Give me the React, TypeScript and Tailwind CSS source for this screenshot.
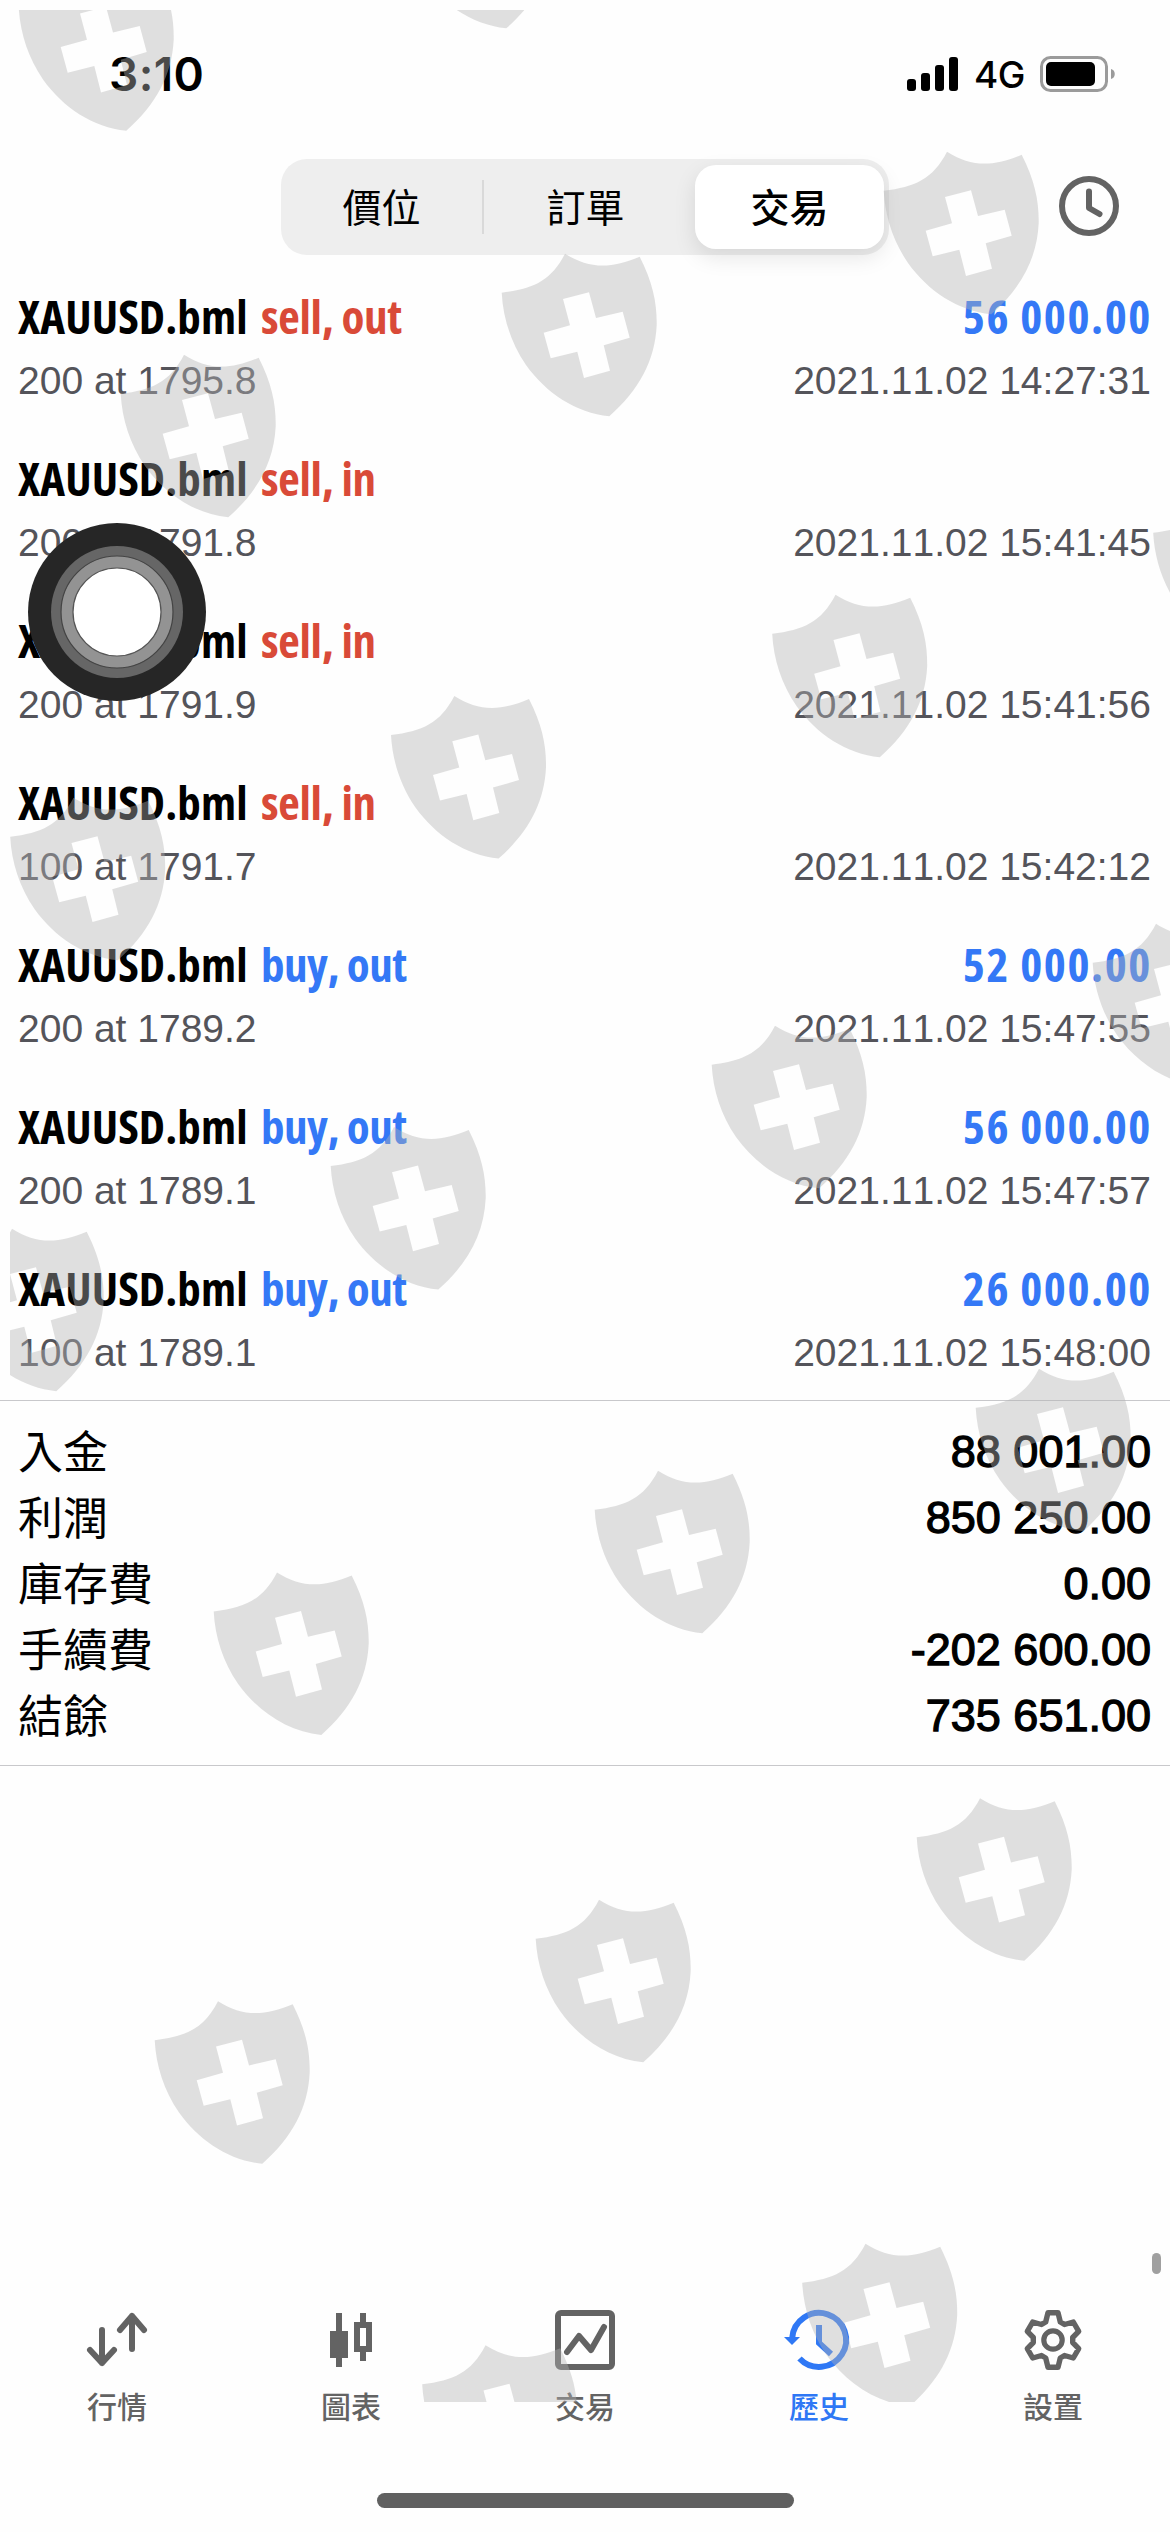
import type { ReactNode } from 'react'

const deals = [
  { side: 'sell, out', volume: '200 at 1795.8', time: '2021.11.02 14:27:31', profit: '56 000.00' },
  { side: 'sell, in', volume: '200 at 1791.8', time: '2021.11.02 15:41:45' },
  { side: 'sell, in', volume: '200 at 1791.9', time: '2021.11.02 15:41:56' },
  { side: 'sell, in', volume: '100 at 1791.7', time: '2021.11.02 15:42:12' },
  { side: 'buy, out', volume: '200 at 1789.2', time: '2021.11.02 15:47:55', profit: '52 000.00' },
  { side: 'buy, out', volume: '200 at 1789.1', time: '2021.11.02 15:47:57', profit: '56 000.00' },
  { side: 'buy, out', volume: '100 at 1789.1', time: '2021.11.02 15:48:00', profit: '26 000.00' },
]

const totals = [
  { label: '入金', value: '88 001.00' },
  { label: '利潤', value: '850 250.00' },
  { label: '庫存費', value: '0.00' },
  { label: '手續費', value: '-202 600.00' },
  { label: '結餘', value: '735 651.00' },
]

// top-left corner of every watermark shield
const shields = [
  [18, -32.6], [398, -135],
  [120, 354], [501, 253], [883, 151],
  [9.5, 797], [390.3, 695.3], [771.5, 594], [1152.5, 493],
  [-52, 1228], [330, 1126.3], [711, 1025], [1092, 923],
  [213, 1571.7], [594, 1470], [975, 1368],
  [154, 2000.5], [535, 1899], [916, 1797.5],
  [421.5, 2344.5], [801.5, 2243],
]

function StatusBar() {
  return (
    <header className="flex h-[148px] justify-between pl-[109px] pr-[55px] pt-[45px]">
      <span className="h-[58px] font-['Inter','Liberation_Sans',sans-serif] text-[46px] font-semibold leading-[58px] tracking-[0.4px] text-black">
        3:10
      </span>
      <div className="flex h-[58px] items-center">
        <svg className="h-[34px] w-[51px]" viewBox="0 0 51 34">
          <rect x="0" y="22" width="9" height="12" rx="3" />
          <rect x="14" y="16" width="9" height="18" rx="3" />
          <rect x="28" y="8" width="9" height="26" rx="3" />
          <rect x="42" y="0" width="9" height="34" rx="3" />
        </svg>
        <span className="ml-[16px] w-[50px] whitespace-nowrap pt-[2px] font-['Inter','Liberation_Sans',sans-serif] text-[37px] font-medium leading-[58px] tracking-[-0.5px] text-black">
          4G
        </span>
        <svg className="ml-[16px] h-[36px] w-[75px]" viewBox="0 0 75 36">
          <rect x="1.5" y="1.5" width="65" height="33" rx="9" fill="none" stroke="#9b9b9b" strokeWidth="3" />
          <rect x="6" y="6" width="49" height="24" rx="5" />
          <path d="M71 13c5 1 5 9 0 10z" fill="#9b9b9b" />
        </svg>
      </div>
    </header>
  )
}

function Toolbar() {
  return (
    <div className="flex h-[124px] items-start pl-[281px] pt-[11px] font-['Noto_Sans_CJK_TC',sans-serif] text-[39px] text-black">
      <div className="flex h-[96px] w-[608px] items-center rounded-[26px] bg-[#eeeeee]">
        <div className="w-[201px] pb-[4px] text-center leading-[92px]">價位</div>
        <div className="h-[54px] w-[2px] bg-[#d9d9d9]" />
        <div className="w-[203px] pb-[4px] text-center leading-[92px]">訂單</div>
        <div className="ml-[8px] h-[84px] w-[189px] rounded-[21px] bg-white text-center font-medium leading-[80px] shadow-[0_8px_22px_rgba(0,0,0,0.1)]">
          交易
        </div>
      </div>
      <svg className="ml-[170px] mt-[17px] h-[60px] w-[60px]" viewBox="0 0 60 60" fill="none" stroke="#636363" strokeWidth="6">
        <circle cx="30" cy="30" r="27" />
        <path d="M30 15.5V32l10.5 6" strokeLinecap="round" strokeLinejoin="round" />
      </svg>
    </div>
  )
}

function DealRow({ side, volume, time, profit }: { side: string; volume: string; time: string; profit?: string }) {
  const sell = side.startsWith('sell')
  return (
    <div className="h-[162px] pl-[18px] pr-[19px] pt-[14px]">
      <div className="flex h-[60px] items-center justify-between whitespace-nowrap font-['Open_Sans',sans-serif] text-[47px] font-bold leading-[60px] [font-stretch:75%]">
        <div className="flex">
          <span className="w-[243px] tracking-[0.1px] text-black">XAUUSD.bml</span>
          <span className={sell ? 'tracking-[-0.3px] text-[#d94a38]' : 'tracking-[-0.5px] text-[#3478f6]'}>{side}</span>
        </div>
        {profit && <span className="-mr-px tracking-[1.6px] text-[#3478f6]">{profit}</span>}
      </div>
      <div className="mt-[8px] flex h-[54px] justify-between font-['Liberation_Sans',sans-serif] text-[39px] leading-[54px] text-[#54545a] [font-kerning:none]">
        <span>{volume}</span>
        <span>{time}</span>
      </div>
    </div>
  )
}

function Tab({ label, active, children }: { label: string; active?: boolean; children: ReactNode }) {
  return (
    <div className={active ? 'flex w-[234px] flex-col items-center text-[#2f78f5]' : 'flex w-[234px] flex-col items-center text-[#636363]'}>
      <svg className="h-[60px] w-[60px] overflow-visible" viewBox="0 0 60 60" fill="none" stroke="currentColor" strokeWidth="6">
        {children}
      </svg>
      <span className="mt-[15px] font-['Noto_Sans_CJK_TC',sans-serif] text-[30px] font-medium leading-[40px]">{label}</span>
    </div>
  )
}

function TabBar() {
  return (
    <nav className="flex h-[183px]">
      <Tab label="行情">
        <path d="M15 20v33M3 40l12 13 12-13M45 39V6M33 20L45 6l12 14" strokeLinecap="round" strokeLinejoin="round" />
      </Tab>
      <Tab label="圖表">
        <path d="M18 3v54M42 3v9M42 42v9" />
        <rect x="9" y="21" width="18" height="27" fill="currentColor" stroke="none" />
        <rect x="36" y="15" width="12" height="24" />
      </Tab>
      <Tab label="交易">
        <rect x="3" y="3" width="54" height="54" rx="3" />
        <path d="M12 42l12-16 12 14 13-23" strokeLinecap="round" strokeLinejoin="round" />
      </Tab>
      <Tab label="歷史" active>
        <path d="M3.2 28A27 27 0 1 1 10.5 48.5" />
        <path d="M30 15v18l12 11" />
        <path d="M-5 27h16l-8 8z" fill="currentColor" stroke="none" />
      </Tab>
      <Tab label="設置">
        <path
          d="M25 2.7H35L37.3 12L41.5 14.5L50.3 12L55.7 21.3L49.7 27.5V32.5L55.7 38.7L50.3 48L41.5 45.5L37.3 48L35 57.3H25L22.7 48L18.5 45.5L9.7 48L4.3 38.7L10.3 32.5V27.5L4.3 21.3L9.7 12L18.5 14.5L22.7 12Z"
          strokeWidth="5.4"
          strokeLinejoin="round"
        />
        <circle cx="30" cy="30" r="9.2" strokeWidth="5.2" />
      </Tab>
    </nav>
  )
}

function Watermark() {
  return (
    <svg className="pointer-events-none absolute left-0 top-0 h-[2532px] w-[1170px]" viewBox="0 0 1170 2532">
      <clipPath id="area">
        <rect x="10" y="10" width="1160" height="2392" />
      </clipPath>
      <g clipPath="url(#area)" fill="#b4b4b4" fillOpacity="0.41" fillRule="evenodd">
        {shields.map(([x, y]) => (
          <path
            key={`${x}-${y}`}
            transform={`translate(${x} ${y})`}
            d="M0.7 39.7C32 36 50 28 64 0.7C88 16 110 16 138.7 3.7C152 30 156 50 155.7 72C154 108 138 137 108.3 163.3C75 160 45 140 25 112C10 90 2 65 0.7 39.7ZM62 46L88 39.3L95 65L121.7 58.7L128.7 84.7L102.7 92.3L109 117.7L83 125L76.3 98.7L49.7 105.3L42.7 79.7L69 72.3Z"
          />
        ))}
      </g>
    </svg>
  )
}

export default function App() {
  return (
    <div className="relative flex h-[2532px] w-[1170px] flex-col overflow-hidden bg-[#fefefe]">
      <StatusBar />
      <Toolbar />
      <main className="h-[1128px]">
        {deals.map((deal) => (
          <DealRow key={deal.time} {...deal} />
        ))}
      </main>
      <section className="h-[366px] border-y border-[#c8c8cb] pl-[18px] pr-[19px] pt-[18px] text-black">
        {totals.map((row) => (
          <div key={row.label} className="flex h-[66px] justify-between text-[45px] leading-[66px]">
            <span className="font-['Noto_Sans_CJK_TC',sans-serif] leading-[62px]">{row.label}</span>
            <span className="font-['Liberation_Sans',sans-serif] [-webkit-text-stroke:1.3px_black] [font-kerning:none]">{row.value}</span>
          </div>
        ))}
      </section>
      <div className="flex-1" />
      <TabBar />
      <div className="mx-auto mb-[24px] h-[15px] w-[417px] rounded-full bg-[#606060]" />

      <div className="absolute right-[9px] top-[2253px] h-[21px] w-[9px] rounded-full bg-[#a0a0a0]" />
      <Watermark />

      {/* floating touch button */}
      <svg className="absolute left-[28px] top-[523px] h-[178px] w-[178px]" viewBox="0 0 178 178">
        <circle cx="89" cy="89" r="89" fill="#262626" />
        <circle cx="89" cy="89" r="66" fill="#666666" />
        <circle cx="89" cy="89" r="56" fill="#939393" stroke="#444444" strokeWidth="1.2" />
        <circle cx="89" cy="89" r="44" fill="#ffffff" stroke="#555555" strokeWidth="1.2" />
      </svg>
    </div>
  )
}
